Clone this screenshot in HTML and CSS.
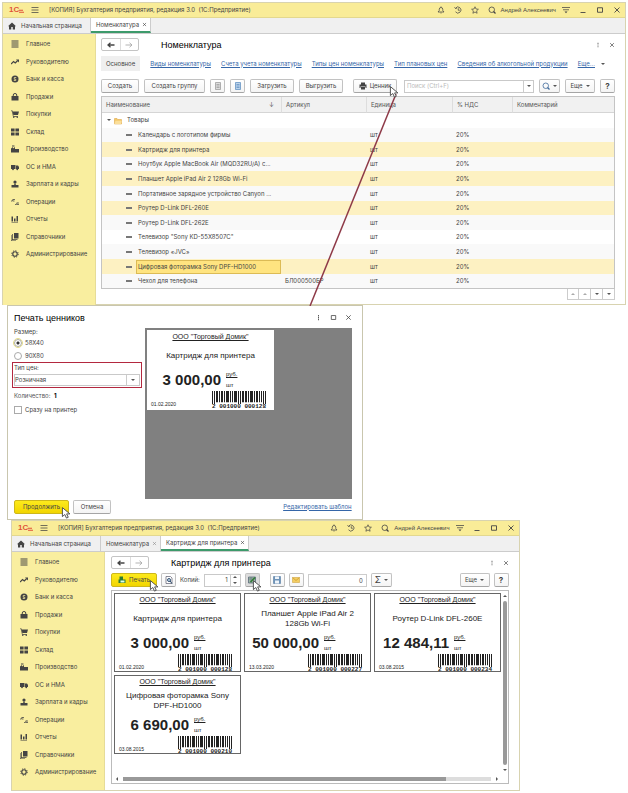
FILE: index.html
```html
<!DOCTYPE html>
<html lang="ru">
<head>
    <meta charset="UTF-8">
    <meta name="viewport" content="width=device-width, initial-scale=1.0">
    <title>Печать ценников</title>
    <link rel="stylesheet" href="styles.css">
</head>
<body>

<!-- shared icons -->
<svg class="sprite" aria-hidden="true">
    <symbol id="i-bell" viewBox="0 0 16 16"><path d="M2 12h12l-2.500-3V6.500a3.500 3.500 0 0 0-7 0V9zM7 14h2M8 1v2" fill="none" stroke="currentColor" stroke-width="1.500"/></symbol>
    <symbol id="i-clock" viewBox="0 0 16 16"><path d="M3 4.500A6 6 0 1 1 3 11.500M1 2.500l2 2.500 3-1M8.500 4.500V8.500h3" fill="none" stroke="currentColor" stroke-width="1.500"/></symbol>
    <symbol id="i-star" viewBox="0 0 16 16"><path d="M8 1.500l2 4.500 4.800.5-3.600 3.200 1 4.800L8 12l-4.200 2.500 1-4.800L1.200 6.500 6 6z" fill="none" stroke="currentColor" stroke-width="1.400"/></symbol>
    <symbol id="i-lens" viewBox="0 0 16 16"><circle cx="7.500" cy="7.500" r="5.500" fill="none" stroke="currentColor" stroke-width="1.600"/><path d="M11 11l4 4" stroke="currentColor" stroke-width="2.400"/></symbol>
    <symbol id="i-filter" viewBox="0 0 16 16"><path d="M0 3h16M2 7.500h12" stroke="currentColor" stroke-width="1.500"/><path d="M5 11h6l-3 3.500z" fill="currentColor"/></symbol>
    <symbol id="i-min" viewBox="0 0 16 16"><path d="M3 13h10" stroke="currentColor" stroke-width="1.800"/></symbol>
    <symbol id="i-max" viewBox="0 0 16 16"><path d="M3 3.500h10v9H3z" fill="none" stroke="currentColor" stroke-width="1.800"/></symbol>
    <symbol id="i-close" viewBox="0 0 16 16"><path d="M3 3l10 10M13 3L3 13" stroke="currentColor" stroke-width="1.800"/></symbol>
    <symbol id="i-dots" viewBox="0 0 16 16"><path d="M7 2h2v3H7zM7 6.500h2v3H7zM7 11h2v3H7z" fill="currentColor"/></symbol>
    <symbol id="i-burger" viewBox="0 0 16 16"><path d="M1 3h14M1 8h14M1 13h14" stroke="currentColor" stroke-width="1.500"/></symbol>
    <symbol id="i-home" viewBox="0 0 16 16"><path d="M8 1L0 8.500h2V15h4.500v-5h3v5H14V8.500h2z" fill="currentColor"/></symbol>
    <symbol id="i-left" viewBox="0 0 16 16"><path d="M2 8h13M7 3.500L2 8l5 4.500" fill="none" stroke="currentColor" stroke-width="2.600"/></symbol>
    <symbol id="i-right" viewBox="0 0 16 16"><path d="M1 8h13M9 3.500L14 8l-5 4.500" fill="none" stroke="currentColor" stroke-width="1.800"/></symbol>
    <symbol id="i-cursor" viewBox="0 0 16 20"><path d="M2 1v15l4-3.500 2.800 6 3-1.400L9 11.500h5.500z" fill="#fff" stroke="#444" stroke-width="1.500"/></symbol>
    <symbol id="i-folder" viewBox="0 0 16 16"><path d="M1 3h5l1.500 2H15v9H1z" fill="#f4c868" stroke="#d99d38"/><path d="M3 7.500h12.500L14 14H1z" fill="#fbdf9a"/></symbol>
    <symbol id="i-tail" viewBox="0 0 10 10"><path d="M0 4.500h8M0 8.500h10" stroke="currentColor" stroke-width="2"/></symbol>

    <symbol id="m-main" viewBox="0 0 16 16"><path d="M1 2h14M1 6h14M1 10h14M1 14h14" stroke="currentColor" stroke-width="2"/></symbol>
    <symbol id="m-chief" viewBox="0 0 16 16"><path d="M0 12l5-5 3.500 3L13 5.500" fill="none" stroke="currentColor" stroke-width="2.400"/><path d="M10 3h6v6z" fill="currentColor"/></symbol>
    <symbol id="m-bank" viewBox="0 0 16 16"><circle cx="8" cy="8" r="7" fill="currentColor"/><path d="M10.500 5H6.500v3.500h3V11H5.500" fill="none" stroke="#f9ee9f" stroke-width="1.500"/></symbol>
    <symbol id="m-sales" viewBox="0 0 16 16"><path d="M1 6h14v9H1z" fill="currentColor"/><path d="M4.500 6V4a3.500 3 0 0 1 7 0v2" fill="none" stroke="currentColor" stroke-width="2"/></symbol>
    <symbol id="m-cart" viewBox="0 0 16 16"><path d="M3 3h13l-2 7H5zM0 1h3l2 11h9v1.500H4L2 2.500H0z" fill="currentColor"/><circle cx="5.500" cy="14.500" r="1.500" fill="currentColor"/><circle cx="12.500" cy="14.500" r="1.500" fill="currentColor"/></symbol>
    <symbol id="m-stock" viewBox="0 0 16 16"><path d="M0 1h7.200v6.200H0zM8.800 1H16v6.200H8.800zM0 8.800h7.200V15H0zM8.800 8.800H16V15H8.800z" fill="currentColor"/></symbol>
    <symbol id="m-prod" viewBox="0 0 16 16"><path d="M0 15V7l4-3v3l4-3v4h8v7zM2 1h5v2H2z" fill="currentColor"/></symbol>
    <symbol id="m-truck" viewBox="0 0 16 16"><path d="M0 4h9v8H0zM10 5h4l2 3v4h-6z" fill="currentColor"/><circle cx="4" cy="12.500" r="1.800" fill="currentColor"/><circle cx="12.500" cy="12.500" r="1.800" fill="currentColor"/></symbol>
    <symbol id="m-staff" viewBox="0 0 16 16"><circle cx="8" cy="4" r="3.200" fill="currentColor"/><path d="M6.500 7h3v3H15v5H1v-5h5.500z" fill="currentColor"/></symbol>
    <symbol id="m-ops" viewBox="0 0 16 16"><path d="M0 6h3l1-4M4 3h4M4 6h3M8 13h3l1-4M12 10h4M12 13h4" fill="none" stroke="currentColor" stroke-width="1.500"/></symbol>
    <symbol id="m-report" viewBox="0 0 16 16"><path d="M1 3h3v10H1zM6 7h3v6H6zM11 2h3v11h-3zM1 14h13v1H1z" fill="currentColor"/></symbol>
    <symbol id="m-books" viewBox="0 0 16 16"><path d="M6 0h9v11H6zM3.500 2v10.500H13V14H2V2zM1 4v11h9v1H0V4z" fill="currentColor"/></symbol>
    <symbol id="m-gear" viewBox="0 0 16 16"><circle cx="8" cy="8" r="4.500" fill="none" stroke="currentColor" stroke-width="2.400"/><circle cx="8" cy="8" r="6.500" fill="none" stroke="currentColor" stroke-width="2" stroke-dasharray="2.500 2.600"/></symbol>

    <symbol id="barcode" viewBox="0 0 54 14" preserveAspectRatio="none">
        <path fill="#222" d="M0 0h1v14H0zM2 0h1v14H2zM4 0h2v12H4zM7 0h1v12H7zM9 0h2v12H9zM12 0h1v12H12zM14 0h3v12H14zM18 0h1v12H18zM20 0h1v12H20zM22 0h3v12H22zM26 0h1v14H26zM28 0h1v14H28zM30 0h2v12H30zM33 0h2v12H33zM36 0h1v12H36zM38 0h3v12H38zM42 0h1v12H42zM44 0h2v12H44zM47 0h1v12H47zM49 0h1v12H49zM51 0h1v14H51zM53 0h1v14H53z"/>
    </symbol>
</svg>

<main class="desk">

    <!-- item list -->
    <section class="window window-list">
        <header class="titlebar">
            <span class="logo">1С<svg><use href="#i-tail"/></svg></span>
            <svg class="icon burger"><use href="#i-burger"/></svg>
            <span class="app-name">[КОПИЯ] Бухгалтерия предприятия, редакция 3.0&nbsp; (1С:Предприятие)</span>
            <div class="title-tools">
                <svg class="icon"><use href="#i-bell"/></svg>
                <svg class="icon"><use href="#i-clock"/></svg>
                <svg class="icon"><use href="#i-star"/></svg>
                <svg class="icon"><use href="#i-lens"/></svg>
                <span class="user">Андрей Алексеевич</span>
                <svg class="icon"><use href="#i-filter"/></svg>
                <svg class="icon"><use href="#i-min"/></svg>
                <svg class="icon"><use href="#i-max"/></svg>
                <svg class="icon"><use href="#i-close"/></svg>
            </div>
        </header>
        <nav class="tabs">
            <a class="tab tab-home" href="#"><svg class="icon"><use href="#i-home"/></svg>Начальная страница</a>
            <a class="tab active" href="#">Номенклатура<svg class="icon x"><use href="#i-close"/></svg></a>
        </nav>
        <div class="window-body">
            <ul class="sidebar">
                <li><a href="#"><svg class="icon"><use href="#m-main"/></svg>Главное</a></li>
                <li><a href="#"><svg class="icon"><use href="#m-chief"/></svg>Руководителю</a></li>
                <li><a href="#"><svg class="icon"><use href="#m-bank"/></svg>Банк и касса</a></li>
                <li><a href="#"><svg class="icon"><use href="#m-sales"/></svg>Продажи</a></li>
                <li><a href="#"><svg class="icon"><use href="#m-cart"/></svg>Покупки</a></li>
                <li><a href="#"><svg class="icon"><use href="#m-stock"/></svg>Склад</a></li>
                <li><a href="#"><svg class="icon"><use href="#m-prod"/></svg>Производство</a></li>
                <li><a href="#"><svg class="icon"><use href="#m-truck"/></svg>ОС и НМА</a></li>
                <li><a href="#"><svg class="icon"><use href="#m-staff"/></svg>Зарплата и кадры</a></li>
                <li><a href="#"><svg class="icon"><use href="#m-ops"/></svg>Операции</a></li>
                <li><a href="#"><svg class="icon"><use href="#m-report"/></svg>Отчеты</a></li>
                <li><a href="#"><svg class="icon"><use href="#m-books"/></svg>Справочники</a></li>
                <li><a href="#"><svg class="icon"><use href="#m-gear"/></svg>Администрирование</a></li>
            </ul>
            <div class="content">
                <div class="heading">
                    <div class="history">
                        <button type="button" aria-label="Назад"><svg class="icon"><use href="#i-left"/></svg></button>
                        <button type="button" aria-label="Вперед" disabled><svg class="icon"><use href="#i-right"/></svg></button>
                    </div>
                    <h1>Номенклатура</h1>
                    <svg class="icon small"><use href="#i-dots"/></svg>
                    <svg class="icon small"><use href="#i-close"/></svg>
                </div>
                <nav class="sections">
                    <span class="current">Основное</span>
                    <a href="#">Виды номенклатуры</a>
                    <a href="#">Счета учета номенклатуры</a>
                    <a href="#">Типы цен номенклатуры</a>
                    <a href="#">Тип плановых цен</a>
                    <a href="#">Сведения об алкогольной продукции</a>
                    <span class="more"><a href="#">Еще...</a><i class="caret"></i></span>
                </nav>
                <div class="toolbar">
                    <button type="button" class="btn w-38">Создать</button>
                    <button type="button" class="btn w-61">Создать группу</button>
                    <button type="button" class="btn w-icon" aria-label="Копировать"><svg class="icon" viewBox="0 0 16 16"><path d="M3 1h10v14H3zM5 5h6M5 8h6M5 11h6" fill="#ddd" stroke="#999" stroke-width="1.500"/></svg></button>
                    <button type="button" class="btn w-icon" aria-label="Список"><svg class="icon" viewBox="0 0 16 16"><path d="M3 1h10v14H3zM5 5h6M5 8h6M5 11h6" fill="#bcd3ea" stroke="#5f8fc0" stroke-width="1.500"/></svg></button>
                    <button type="button" class="btn w-44">Загрузить</button>
                    <button type="button" class="btn w-44">Выгрузить</button>
                    <button type="button" class="btn w-44 tag-btn">
                        <svg class="icon" viewBox="0 0 16 16"><path d="M4 1h8v4H4zM1 5h14v7h-2V9H3v3H1zM4 10h8v5H4z" fill="#444"/></svg>Ценник
                        <svg class="cursor"><use href="#i-cursor"/></svg>
                    </button>
                    <div class="search">
                        <input type="text" placeholder="Поиск (Ctrl+F)" aria-label="Поиск">
                        <button type="button" aria-label="История поиска"><i class="caret"></i></button>
                    </div>
                    <button type="button" class="btn w-20" aria-label="Найти"><svg class="icon blue"><use href="#i-lens"/></svg><i class="caret"></i></button>
                    <button type="button" class="btn w-30">Еще<i class="caret"></i></button>
                    <button type="button" class="btn w-icon help">?</button>
                </div>
                <table class="items">
                    <colgroup><col class="c-name"><col class="c-art"><col class="c-unit"><col class="c-vat"><col></colgroup>
                    <thead>
                        <tr><th>Наименование<span class="sort">↓</span></th><th>Артикул</th><th>Единица</th><th>% НДС</th><th>Комментарий</th></tr>
                    </thead>
                    <tbody>
                        <tr class="group"><td><i class="caret"></i><svg class="icon"><use href="#i-folder"/></svg>Товары</td><td></td><td></td><td></td><td></td></tr>
                        <tr><td><span>Календарь с логотипом фирмы</span></td><td></td><td>шт</td><td>20%</td><td></td></tr>
                        <tr class="marked"><td><span>Картридж для принтера</span></td><td></td><td>шт</td><td>20%</td><td></td></tr>
                        <tr><td><span>Ноутбук Apple MacBook Air (MQD32RU/A) с...</span></td><td></td><td>шт</td><td>20%</td><td></td></tr>
                        <tr class="marked"><td><span>Планшет Apple iPad Air 2 128Gb Wi-Fi</span></td><td></td><td>шт</td><td>20%</td><td></td></tr>
                        <tr><td><span>Портативное зарядное устройство Canyon ...</span></td><td></td><td>шт</td><td>20%</td><td></td></tr>
                        <tr class="marked"><td><span>Роутер D-Link DFL-260E</span></td><td></td><td>шт</td><td>20%</td><td></td></tr>
                        <tr><td><span>Роутер D-Link DFL-262E</span></td><td></td><td>шт</td><td>20%</td><td></td></tr>
                        <tr class="plain"><td><span>Телевизор "Sony KD-55X8507C"</span></td><td></td><td>шт</td><td>20%</td><td></td></tr>
                        <tr><td><span>Телевизор «JVC»</span></td><td></td><td>шт</td><td>20%</td><td></td></tr>
                        <tr class="marked"><td><span><mark>Цифровая фоторамка Sony DPF-HD1000</mark></span></td><td></td><td>шт</td><td>20%</td><td></td></tr>
                        <tr><td><span>Чехол для телефона</span></td><td>БЛ000500БР</td><td>шт</td><td>20%</td><td></td></tr>
                    </tbody>
                </table>
                <div class="pager">
                    <button type="button" aria-label="В начало" disabled><i class="caret up"></i></button>
                    <button type="button" aria-label="Вверх" disabled><i class="caret up"></i></button>
                    <button type="button" aria-label="Вниз"><i class="caret"></i></button>
                    <button type="button" aria-label="В конец"><i class="caret"></i></button>
                </div>
            </div>
        </div>
        <svg class="pointer-line" viewBox="0 0 88 212"><path d="M87 0L1 212" stroke="#8e3a48" stroke-width="1.500"/></svg>
    </section>

    <!-- price tag dialog -->
    <section class="window window-dialog">
        <div class="heading">
            <h2>Печать ценников</h2>
            <svg class="icon"><use href="#i-dots"/></svg>
            <svg class="icon"><use href="#i-max"/></svg>
            <svg class="icon"><use href="#i-close"/></svg>
        </div>
        <form class="dialog-form">
            <div class="fields">
                <div class="label">Размер:</div>
                <label class="check focus"><input type="radio" name="size" checked>58X40</label>
                <label class="check"><input type="radio" name="size">90X80</label>
                <div class="price-type">
                    <label for="priceType">Тип цен:</label>
                    <div class="select">
                        <select id="priceType"><option>Розничная</option></select>
                        <i class="caret"></i>
                    </div>
                </div>
                <div class="label count">Количество: <b>1</b></div>
                <label class="check"><input type="checkbox">Сразу на принтер</label>
            </div>
            <div class="preview">
                <article class="tag">
                    <h3>ООО "Торговый Домик"</h3>
                    <p class="name">Картридж для принтера</p>
                    <div class="price"><b>3 000,00</b><span><u>руб.</u>шт</span></div>
                    <div class="foot"><time>01.02.2020</time><div class="code"><svg><use href="#barcode"/></svg>2 001000 000128</div></div>
                </article>
            </div>
            <div class="actions">
                <button type="button" class="btn primary w-55">Продолжить<svg class="cursor"><use href="#i-cursor"/></svg></button>
                <button type="button" class="btn w-38">Отмена</button>
                <a href="#">Редактировать шаблон</a>
            </div>
        </form>
    </section>

    <!-- printed tags -->
    <section class="window window-print">
        <header class="titlebar">
            <span class="logo">1С<svg><use href="#i-tail"/></svg></span>
            <svg class="icon burger"><use href="#i-burger"/></svg>
            <span class="app-name">[КОПИЯ] Бухгалтерия предприятия, редакция 3.0&nbsp; (1С:Предприятие)</span>
            <div class="title-tools">
                <svg class="icon"><use href="#i-bell"/></svg>
                <svg class="icon"><use href="#i-clock"/></svg>
                <svg class="icon"><use href="#i-star"/></svg>
                <svg class="icon"><use href="#i-lens"/></svg>
                <span class="user">Андрей Алексеевич</span>
                <svg class="icon"><use href="#i-filter"/></svg>
                <svg class="icon"><use href="#i-min"/></svg>
                <svg class="icon"><use href="#i-max"/></svg>
                <svg class="icon"><use href="#i-close"/></svg>
            </div>
        </header>
        <nav class="tabs">
            <a class="tab tab-home" href="#"><svg class="icon"><use href="#i-home"/></svg>Начальная страница</a>
            <a class="tab" href="#">Номенклатура<svg class="icon x"><use href="#i-close"/></svg></a>
            <a class="tab active wide" href="#">Картридж для принтера<svg class="icon x"><use href="#i-close"/></svg></a>
        </nav>
        <div class="window-body">
            <ul class="sidebar">
                <li><a href="#"><svg class="icon"><use href="#m-main"/></svg>Главное</a></li>
                <li><a href="#"><svg class="icon"><use href="#m-chief"/></svg>Руководителю</a></li>
                <li><a href="#"><svg class="icon"><use href="#m-bank"/></svg>Банк и касса</a></li>
                <li><a href="#"><svg class="icon"><use href="#m-sales"/></svg>Продажи</a></li>
                <li><a href="#"><svg class="icon"><use href="#m-cart"/></svg>Покупки</a></li>
                <li><a href="#"><svg class="icon"><use href="#m-stock"/></svg>Склад</a></li>
                <li><a href="#"><svg class="icon"><use href="#m-prod"/></svg>Производство</a></li>
                <li><a href="#"><svg class="icon"><use href="#m-truck"/></svg>ОС и НМА</a></li>
                <li><a href="#"><svg class="icon"><use href="#m-staff"/></svg>Зарплата и кадры</a></li>
                <li><a href="#"><svg class="icon"><use href="#m-ops"/></svg>Операции</a></li>
                <li><a href="#"><svg class="icon"><use href="#m-report"/></svg>Отчеты</a></li>
                <li><a href="#"><svg class="icon"><use href="#m-books"/></svg>Справочники</a></li>
                <li><a href="#"><svg class="icon"><use href="#m-gear"/></svg>Администрирование</a></li>
            </ul>
            <div class="content">
                <div class="heading">
                    <div class="history">
                        <button type="button" aria-label="Назад"><svg class="icon"><use href="#i-left"/></svg></button>
                        <button type="button" aria-label="Вперед" disabled><svg class="icon"><use href="#i-right"/></svg></button>
                    </div>
                    <h1>Картридж для принтера</h1>
                    <svg class="icon small"><use href="#i-dots"/></svg>
                    <svg class="icon small"><use href="#i-close"/></svg>
                </div>
                <div class="toolbar">
                    <button type="button" class="btn primary w-46"><svg class="icon" viewBox="0 0 16 16"><path d="M1 7h14v7H1zM3 1h7v6H3z" fill="#2e7d32"/><path d="M5 9h8v4H5z" fill="#dfe"/></svg>Печать<svg class="cursor"><use href="#i-cursor"/></svg></button>
                    <button type="button" class="btn w-icon" aria-label="Просмотр"><svg class="icon" viewBox="0 0 16 16"><path d="M2 1h9l3 3v11H2z" fill="#fff" stroke="#667" stroke-width="1.500"/><circle cx="8" cy="8" r="3" fill="#cde" stroke="#246" stroke-width="1.800"/><path d="M10 10l4 5" stroke="#246" stroke-width="2"/></svg></button>
                    <label for="copies">Копий:</label>
                    <div class="copies"><input type="text" id="copies" value="1"><span class="spin"><i class="caret up"></i><i class="caret"></i></span></div>
                    <button type="button" class="btn w-icon pressed" aria-label="Редактирование"><svg class="icon" viewBox="0 0 16 16"><path d="M1 2h14v12H1z" fill="#9fb8a6" stroke="#567" stroke-width="1.500"/><path d="M1 6h14M6 2v12" stroke="#567"/><path d="M5 12L14 3" stroke="#2e7d32" stroke-width="3"/></svg><svg class="cursor"><use href="#i-cursor"/></svg></button>
                    <span class="space"></span>
                    <button type="button" class="btn w-icon" aria-label="Сохранить"><svg class="icon" viewBox="0 0 16 16"><path d="M1 1h14v14H1z" fill="#6d93b8" stroke="#456f99"/><path d="M4 1h8v5H4zM4 9h8v6H4z" fill="#eef4fa"/></svg></button>
                    <button type="button" class="btn w-icon" aria-label="Отправить"><svg class="icon" viewBox="0 0 16 16"><path d="M1 3h14v10H1z" fill="#f3cd62" stroke="#c99a2c"/><path d="M1 3l7 6 7-6" fill="none" stroke="#c99a2c" stroke-width="1.500"/></svg></button>
                    <input type="text" class="sum" value="0" aria-label="Сумма">
                    <button type="button" class="btn w-20 sigma" aria-label="Итог">Σ<i class="caret"></i></button>
                    <button type="button" class="btn w-30 push">Еще<i class="caret"></i></button>
                    <button type="button" class="btn w-icon help">?</button>
                </div>
                <div class="sheet">
                    <div class="tags">
                        <article class="tag">
                            <h3>ООО "Торговый Домик"</h3>
                            <p class="name">Картридж для принтера</p>
                            <div class="price"><b>3 000,00</b><span><u>руб.</u>шт</span></div>
                            <div class="foot"><time>01.02.2020</time><div class="code"><svg><use href="#barcode"/></svg>2 001000 000128</div></div>
                        </article>
                        <article class="tag">
                            <h3>ООО "Торговый Домик"</h3>
                            <p class="name">Планшет Apple iPad Air 2 128Gb Wi-Fi</p>
                            <div class="price"><b>50 000,00</b><span><u>руб.</u>шт</span></div>
                            <div class="foot"><time>13.03.2020</time><div class="code"><svg><use href="#barcode"/></svg>2 001000 000227</div></div>
                        </article>
                        <article class="tag">
                            <h3>ООО "Торговый Домик"</h3>
                            <p class="name">Роутер D-Link DFL-260E</p>
                            <div class="price"><b>12 484,11</b><span><u>руб.</u>шт</span></div>
                            <div class="foot"><time>03.08.2015</time><div class="code"><svg><use href="#barcode"/></svg>2 001000 000234</div></div>
                        </article>
                        <article class="tag">
                            <h3>ООО "Торговый Домик"</h3>
                            <p class="name">Цифровая фоторамка Sony DPF-HD1000</p>
                            <div class="price"><b>6 690,00</b><span><u>руб.</u>шт</span></div>
                            <div class="foot"><time>03.08.2015</time><div class="code"><svg><use href="#barcode"/></svg>2 001000 000210</div></div>
                        </article>
                    </div>
                    <div class="scroll-y"><i class="caret up"></i><span class="thumb"></span><i class="caret"></i></div>
                    <div class="scroll-x"><i class="caret left"></i><span class="track"><span class="thumb"></span></span><i class="caret right"></i></div>
                </div>
            </div>
        </div>
    </section>

</main>

</body>
</html>
```

FILE: styles.css
```css
* {
    margin: 0;
    padding: 0;
    box-sizing: border-box;
}
body {
    background: #fff;
    font-family: Inter, "Liberation Sans", Arial, sans-serif;
    font-size: 6px;
    line-height: 8px;
    color: #444;
}
a {
    color: inherit;
    text-decoration: none;
}
ul {
    list-style: none;
}
button, input, select {
    font: inherit;
    color: inherit;
}
.sprite {
    position: absolute;
    width: 0;
    height: 0;
}
.icon {
    width: 8px;
    height: 8px;
    flex: none;
}
.small {
    width: 6px;
    height: 6px;
}
.blue {
    color: #3f6a9c;
}
.caret {
    display: inline-block;
    border: 2px solid transparent;
    border-top-color: #555;
    border-bottom-width: 0;
    flex: none;
}
.caret.up {
    transform: rotate(180deg);
}
.caret.left {
    transform: rotate(90deg);
}
.caret.right {
    transform: rotate(-90deg);
}
.cursor {
    position: absolute;
    right: -3px;
    top: 6px;
    width: 10px;
    height: 12px;
    z-index: 3;
}

/* windows */
.desk {
    padding: 2px;
}
.window {
    position: relative;
    background: #fff;
    border: 1px solid #d8d3b0;
}
.window-list {
    height: 303px;
}
.window-dialog {
    width: 57%;
    height: 215px;
    margin-left: 5px;
    padding: 5px 10px 0 6px;
    border-color: #c9c6ae;
}
.window-print {
    width: 81.5%;
    height: 271px;
    margin-left: 9px;
    display: flex;
    flex-direction: column;
}
.titlebar {
    display: flex;
    align-items: center;
    height: 15px;
    padding: 0 4px 0 6px;
    background: #f9ec98;
    border-bottom: 1px solid #e3d88f;
}
.logo {
    display: flex;
    align-items: center;
    width: 16px;
    font: bold 8px/10px "Liberation Sans", Arial, sans-serif;
    color: #e0523a;
}
.logo svg {
    width: 5px;
    height: 5px;
    flex: none;
}
.burger {
    margin: 0 10px 0 6px;
}
.title-tools {
    display: flex;
    align-items: center;
    gap: 9px;
    margin-left: auto;
}
.user {
    margin: 0 -3px 0 -4px;
    font-family: "Liberation Sans", Arial, sans-serif;
}
.tabs {
    display: flex;
    height: 16px;
    background: #f0f0f0;
    border-bottom: 1px solid #ccc;
}
.tab {
    display: flex;
    align-items: center;
    justify-content: space-between;
    width: 60px;
    padding: 0 3px 0 5px;
    border-right: 1px solid #ccc;
}
.tab .x {
    width: 5px;
    height: 5px;
    color: #888;
}
.tab-home {
    width: 88px;
    justify-content: flex-start;
    gap: 5px;
}
.tab.wide {
    width: 88px;
}
.tab.active {
    background: #fff;
    border-bottom: 2px solid #3d9a6b;
}
.tab.active .x {
    color: #333;
}
.window-body {
    display: flex;
    height: 271px;
}
.window-print .window-body {
    height: auto;
    flex: 1;
}
.sidebar {
    width: 93px;
    flex: none;
    padding: 1px 0 0 8px;
    background: #f9ee9f;
    border-right: 1px solid #e6dc98;
}
.sidebar li {
    padding: 5px 0 4px;
}
.sidebar li:nth-child(odd) {
    padding-bottom: 5px;
}
.sidebar a {
    display: flex;
    align-items: center;
    gap: 7px;
}
.content {
    flex: 1;
    min-width: 0;
    padding: 4px 10px 0 5px;
}
.heading {
    display: flex;
    align-items: center;
    gap: 8px;
    height: 13px;
}
.history {
    display: flex;
    width: 38px;
    height: 13px;
    border: 1px solid #c4c4c4;
    border-radius: 2px;
}
.history button {
    display: flex;
    align-items: center;
    justify-content: center;
    flex: 1;
    background: none;
    border: none;
}
.history button + button {
    border-left: 1px solid #ddd;
    color: #aaa;
}
h1, h2 {
    flex: 1;
    font: 9px/12px "Liberation Sans", Arial, sans-serif;
    color: #000;
}
h1 {
    margin-left: 14px;
}
.sections {
    display: flex;
    align-items: center;
    justify-content: space-between;
    height: 15px;
    margin: 5px 10px 0 0;
    color: #3566a8;
    white-space: nowrap;
}
.sections .current {
    padding: 4px 5px 3px;
    background: #efefef;
    color: #444;
}
.sections a {
    text-decoration: underline;
}
.more {
    display: flex;
    align-items: center;
    gap: 6px;
}

/* buttons and inputs */
.toolbar {
    display: flex;
    align-items: center;
    gap: 5px;
    margin-top: 8px;
}
.btn {
    position: relative;
    display: flex;
    align-items: center;
    justify-content: center;
    gap: 3px;
    flex: none;
    height: 14px;
    background: linear-gradient(#fff, #f4f4f4);
    border: 1px solid #c2c2c2;
    border-bottom-color: #a5a5a5;
    border-radius: 2px;
    white-space: nowrap;
}
.primary {
    background: linear-gradient(#fdea1c, #f2d500);
    border-color: #cdb71b;
}
.pressed {
    background: #ddd;
}
.help {
    font-weight: bold;
    font-size: 8px;
}
.w-icon {
    width: 15px;
}
.w-20 {
    width: 21px;
}
.w-30 {
    width: 30px;
}
.w-38 {
    width: 38px;
}
.w-44 {
    width: 44px;
}
.w-46 {
    width: 46px;
}
.w-55 {
    width: 55px;
}
.w-61 {
    width: 61px;
}
.tag-btn {
    margin: 0 2px 0 5px;
}
.search, .select, .copies {
    display: flex;
    align-items: center;
    height: 13px;
    background: #fff;
    border: 1px solid #c9c9c9;
}
.search {
    flex: 1;
    min-width: 0;
}
.search input {
    flex: 1;
    min-width: 0;
    padding-left: 2px;
    border: none;
    outline: none;
}
.search input::placeholder {
    color: #bbb;
}
.search button {
    display: flex;
    align-items: center;
    justify-content: center;
    width: 10px;
    height: 11px;
    background: none;
    border: none;
    border-left: 1px solid #ccc;
}

/* item table */
.items {
    width: 100%;
    margin-top: 3px;
    border: 1px solid #c4c4c4;
    border-collapse: separate;
    border-spacing: 0;
    table-layout: fixed;
}
.c-name {
    width: 179px;
}
.c-art {
    width: 85px;
}
.c-unit {
    width: 86px;
}
.c-vat {
    width: 60px;
}
.items th {
    height: 16px;
    padding-left: 4px;
    background: #f1f1f1;
    border-bottom: 1px solid #d5d5d5;
    font-weight: normal;
    text-align: left;
    color: #555;
}
.items th + th {
    border-left: 1px solid #ddd;
}
.sort {
    float: right;
    margin-right: 7px;
}
.items td {
    height: 15px;
    padding-left: 4px;
    background: #f9f9f9;
    white-space: nowrap;
}
.items tr:nth-child(5n+2) td, .items tr:nth-child(5n+4) td {
    height: 14px;
}
.items td:first-child {
    padding-left: 24px;
}
.items td:first-child span {
    display: flex;
    align-items: center;
    height: 14px;
}
.items td:first-child span::before {
    content: "";
    width: 6px;
    height: 2px;
    margin-right: 6px;
    background: #777;
}
.items mark {
    flex: 1;
    margin-left: -2px;
    padding: 2px 0 2px 1px;
    background: #ffe480;
    border: 1px solid #dcbb55;
    color: inherit;
}
.items .group td, .items .plain td {
    background: #fff;
}
.items .group td:first-child {
    padding-left: 5px;
}
.group .caret {
    margin: 0 3px 1px 0;
}
.group .icon {
    margin-right: 5px;
    vertical-align: middle;
}
.items .marked td {
    background: #fdf1c2;
}
.pager {
    display: flex;
    justify-content: flex-end;
}
.pager button {
    display: flex;
    align-items: center;
    justify-content: center;
    width: 12px;
    height: 11px;
    background: #fff;
    border: 1px solid #ccc;
    border-top: none;
    border-left-width: 0;
}
.pager button:first-child {
    border-left-width: 1px;
}
.pager button:disabled .caret {
    border-top-color: #aaa;
}
.pointer-line {
    position: absolute;
    left: 306px;
    top: 91px;
    width: 88px;
    height: 212px;
    z-index: 2;
}

/* dialog */
.window-dialog .heading .icon {
    width: 7px;
    height: 7px;
}
.dialog-form {
    display: grid;
    grid-template-columns: 130px 1fr;
    grid-template-rows: 171px 15px;
    column-gap: 3px;
    margin-top: 4px;
    margin-left: -2px;
}
.label, .check {
    margin-left: 2px;
}
.check {
    display: flex;
    align-items: center;
    gap: 3px;
    height: 13px;
}
.check input {
    appearance: none;
    width: 8px;
    height: 8px;
    background: #fff;
    border: 1px solid #aaa;
}
.check input[type="radio"] {
    border-radius: 50%;
}
.check input:checked {
    background: radial-gradient(#333 1px, #fff 2px);
}
.focus input {
    outline: 1px solid #e3dc8a;
}
.price-type {
    padding: 1px;
    border: 1px solid #b3283f;
}
.price-type label {
    display: block;
    height: 10px;
}
.select {
    height: 12px;
    padding-right: 4px;
}
.select select {
    flex: 1;
    height: 10px;
    margin-right: 4px;
    appearance: none;
    background: none;
    border: none;
    border-right: 1px solid #ccc;
}
.count {
    margin-top: 4px;
    margin-bottom: 3px;
    color: #555;
}
.count b {
    margin-left: 2px;
    color: #000;
}
.preview {
    padding: 2px;
    background: #808080;
}
.actions {
    grid-column: 1 / -1;
    display: flex;
    align-items: center;
    gap: 4px;
    padding-left: 2px;
}
.actions a {
    margin-left: auto;
    color: #3566a8;
    text-decoration: underline;
}

/* price tag */
.tag {
    width: 127px;
    height: 80px;
    padding-top: 1px;
    background: #fff;
    color: #222;
    font-family: "Liberation Sans", Arial, sans-serif;
    overflow: hidden;
}
.tag h3 {
    font-size: 7px;
    font-weight: normal;
    line-height: 12px;
    text-align: center;
    text-decoration: underline;
}
.tag .name {
    display: flex;
    align-items: center;
    justify-content: center;
    height: 26px;
    padding: 0 6px;
    font-size: 8px;
    line-height: 10px;
    text-align: center;
}
.price {
    display: flex;
    align-items: center;
    gap: 5px;
    height: 22px;
}
.price b {
    width: 74px;
    font-size: 15px;
    line-height: 22px;
    text-align: right;
    white-space: nowrap;
}
.price span {
    line-height: 11px;
}
.price u {
    display: block;
}
.foot {
    display: flex;
    align-items: center;
    justify-content: space-between;
    padding: 0 8px 0 4px;
}
.foot time {
    padding-top: 8px;
    font-size: 5px;
}
.code {
    font: bold 6px/5px "Liberation Mono", monospace;
}
.code svg {
    display: block;
    width: 54px;
    height: 13px;
}

/* print form */
.window-print .content {
    display: flex;
    flex-direction: column;
    padding: 4px 10px 6px 6px;
}
.window-print .toolbar {
    gap: 4px;
    margin: 4px 0 3px;
}
.window-print .tab-home {
    width: 89px;
}
.copies {
    width: 37px;
}
.copies input {
    flex: 1;
    min-width: 0;
    padding-right: 2px;
    border: none;
    text-align: right;
}
.spin {
    display: flex;
    flex-direction: column;
    justify-content: space-around;
    align-items: center;
    width: 10px;
    height: 11px;
    border-left: 1px solid #ccc;
}
.space {
    width: 2px;
}
.sum {
    width: 59px;
    height: 13px;
    padding-right: 3px;
    border: 1px solid #ccc;
    text-align: right;
}
.sigma {
    font-size: 9px;
}
.push {
    margin-left: auto;
}
.sheet {
    display: grid;
    grid-template-columns: 1fr 6px;
    grid-template-rows: 1fr 8px;
    flex: 1;
    border: 1px solid #bbb;
}
.tags {
    display: flex;
    flex-wrap: wrap;
    align-content: flex-start;
    gap: 3px;
    padding: 2px 0 0 2px;
}
.tags .tag {
    height: 79px;
    border: 1px solid #666;
    padding-top: 0;
}
.scroll-y, .scroll-x {
    display: flex;
    align-items: center;
    gap: 4px;
}
.scroll-y {
    flex-direction: column;
    padding: 4px 0;
}
.scroll-y .thumb {
    width: 4px;
    flex: 1;
    background: #999;
    border-radius: 2px;
}
.scroll-x {
    grid-column: 1 / -1;
    padding: 0 9px 0 3px;
}
.track {
    flex: 1;
    height: 4px;
    background: #ddd;
}
.track .thumb {
    display: block;
    width: 88%;
    height: 4px;
    background: #999;
}
```
